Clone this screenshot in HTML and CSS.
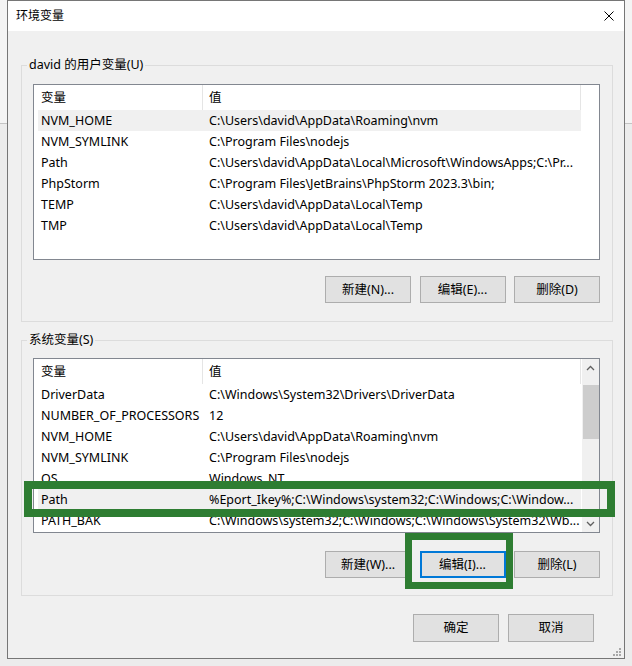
FILE: index.html
```html
<!DOCTYPE html>
<html lang="zh-CN">
<head>
<meta charset="utf-8">
<title>环境变量</title>
<link rel="stylesheet" href="styles.css">
</head>
<body>
<div class="window">
  <div class="titlebar">
    <span class="title">环境变量</span>
    <svg class="close" viewBox="0 0 10 10" aria-hidden="true"><path d="M0.5 0.5 L9.5 9.5 M9.5 0.5 L0.5 9.5" stroke="#000" stroke-width="1" fill="none"/></svg>
  </div>
  <div class="content">
    <div class="group group-user">
      <div class="group-label">david 的用户变量(U)</div>
      <div class="list list-user">
        <div class="list-main">
          <div class="list-head"><div class="head-cell head-name">变量</div><div class="head-cell head-value">值</div></div>
          <div class="row is-selected"><div class="cell-name">NVM_HOME</div><div class="cell-value">C:\Users\david\AppData\Roaming\nvm</div></div>
          <div class="row"><div class="cell-name">NVM_SYMLINK</div><div class="cell-value">C:\Program Files\nodejs</div></div>
          <div class="row"><div class="cell-name">Path</div><div class="cell-value">C:\Users\david\AppData\Local\Microsoft\WindowsApps;C:\Pr...</div></div>
          <div class="row"><div class="cell-name">PhpStorm</div><div class="cell-value">C:\Program Files\JetBrains\PhpStorm 2023.3\bin;</div></div>
          <div class="row"><div class="cell-name">TEMP</div><div class="cell-value">C:\Users\david\AppData\Local\Temp</div></div>
          <div class="row"><div class="cell-name">TMP</div><div class="cell-value">C:\Users\david\AppData\Local\Temp</div></div>
        </div>
      </div>
      <div class="btns">
        <button class="btn">新建(N)...</button>
        <button class="btn">编辑(E)...</button>
        <button class="btn">删除(D)</button>
      </div>
    </div>
    <div class="group group-sys">
      <div class="group-label">系统变量(S)</div>
      <div class="list list-sys">
        <div class="list-main">
          <div class="list-head"><div class="head-cell head-name">变量</div><div class="head-cell head-value">值</div></div>
          <div class="row"><div class="cell-name">DriverData</div><div class="cell-value">C:\Windows\System32\Drivers\DriverData</div></div>
          <div class="row"><div class="cell-name">NUMBER_OF_PROCESSORS</div><div class="cell-value">12</div></div>
          <div class="row"><div class="cell-name">NVM_HOME</div><div class="cell-value">C:\Users\david\AppData\Roaming\nvm</div></div>
          <div class="row"><div class="cell-name">NVM_SYMLINK</div><div class="cell-value">C:\Program Files\nodejs</div></div>
          <div class="row"><div class="cell-name">OS</div><div class="cell-value">Windows_NT</div></div>
          <div class="row is-selected"><div class="cell-name">Path</div><div class="cell-value">%Eport_Ikey%;C:\Windows\system32;C:\Windows;C:\Window...</div></div>
          <div class="row"><div class="cell-name">PATH_BAK</div><div class="cell-value">C:\Windows\system32;C:\Windows;C:\Windows\System32\Wb...</div></div>
        </div>
        <div class="scrollbar">
          <div class="sb-btn"><svg viewBox="0 0 9 6" class="sb-arrow"><polyline points="1,5 4.5,1.5 8,5" fill="none" stroke="#606060" stroke-width="1.3"/></svg></div>
          <div class="sb-thumb"></div>
          <div class="sb-track"></div>
          <div class="sb-btn"><svg viewBox="0 0 9 6" class="sb-arrow"><polyline points="1,1 4.5,4.5 8,1" fill="none" stroke="#606060" stroke-width="1.3"/></svg></div>
        </div>
      </div>
      <div class="btns">
        <button class="btn">新建(W)...</button>
        <button class="btn is-focused">编辑(I)...</button>
        <button class="btn">删除(L)</button>
      </div>
    </div>
    <div class="footer">
      <button class="btn btn-footer">确定</button>
      <button class="btn btn-footer">取消</button>
    </div>
  </div>
  <svg class="grip" viewBox="0 0 10 10" aria-hidden="true">
    <rect x="7" y="1" width="2" height="2" fill="#a8a8a8"/>
    <rect x="4" y="4" width="2" height="2" fill="#a8a8a8"/>
    <rect x="7" y="4" width="2" height="2" fill="#a8a8a8"/>
    <rect x="1" y="7" width="2" height="2" fill="#a8a8a8"/>
    <rect x="4" y="7" width="2" height="2" fill="#a8a8a8"/>
    <rect x="7" y="7" width="2" height="2" fill="#a8a8a8"/>
  </svg>
</div>
<div class="mark mark-row"></div>
<div class="mark mark-btn"></div>
</body>
</html>
```

FILE: styles.css
```css
* {
  box-sizing: border-box;
}

html,
body {
  margin: 0;
  padding: 0;
}

body {
  position: relative;
  width: 632px;
  height: 666px;
  overflow: hidden;
  background: linear-gradient(#f4f4f4 0 123px, #c4c4c4 123px 124px, #ececec 124px);
  font-family: "Noto Sans", "Noto Sans CJK SC", sans-serif;
  font-size: 12.5px;
  color: #000;
}

.window {
  position: relative;
  margin-left: 7px;
  width: 618px;
  height: 659px;
  border: 1px solid #767676;
  background: #f0f0f0;
  display: flex;
  flex-direction: column;
}

.titlebar {
  height: 30px;
  flex: none;
  background: #fff;
  display: flex;
  align-items: center;
  justify-content: space-between;
  padding: 0 10px 0 8px;
}

.title {
  font-size: 12px;
  line-height: 16px;
}

.close {
  width: 10px;
  height: 10px;
  display: block;
}

.content {
  flex: 1;
  display: flex;
  flex-direction: column;
  padding: 34px 11px 16px 13px;
}

.group {
  border: 1px solid #dcdcdc;
  padding: 0 12px 18px 11px;
}

.group + .group {
  margin-top: 18px;
}

.group-sys {
  padding-bottom: 17px;
}

.group-label {
  width: max-content;
  height: 16px;
  line-height: 16px;
  margin: -9px 0 0 -6px;
  padding: 0 2px;
  background: #f0f0f0;
  white-space: nowrap;
}

.list {
  display: flex;
  margin-top: 11px;
  height: 176px;
  border: 1px solid #828790;
  background: #fff;
  overflow: hidden;
}

.list-sys {
  margin-top: 10px;
  height: 175px;
}

.list-main {
  flex: 1;
  min-width: 0;
  overflow: hidden;
}

.list-head {
  display: flex;
  height: 25px;
}

.head-cell {
  height: 25px;
  line-height: 25px;
  border-right: 1px solid #e5e5e5;
  flex: none;
}

.head-name {
  width: 169px;
  padding-left: 7px;
}

.head-value {
  width: 378px;
  padding-left: 6px;
}

.row {
  display: flex;
  width: 543px;
  height: 21px;
  line-height: 21px;
  margin-left: 4px;
  white-space: nowrap;
}

.row.is-selected {
  background: #f0f0f0;
}

.cell-name {
  width: 165px;
  flex: none;
  padding-left: 3px;
  overflow: hidden;
}

.cell-value {
  flex: 1;
  min-width: 0;
  padding-left: 6px;
  overflow: hidden;
}

.scrollbar {
  width: 17px;
  flex: none;
  background: #f0f0f0;
  display: flex;
  flex-direction: column;
}

.sb-btn {
  height: 17px;
  flex: none;
  display: flex;
  align-items: center;
  justify-content: center;
}

.sb-arrow {
  width: 9px;
  height: 6px;
  display: block;
}

.sb-thumb {
  margin: 9px 0 0 1px;
  height: 54px;
  flex: none;
  background: #cdcdcd;
}

.sb-track {
  flex: 1;
}

.btns {
  display: flex;
  justify-content: flex-end;
  gap: 8.5px;
  margin-top: 16px;
}

.group-sys .btns {
  margin-top: 18px;
}

.btn {
  width: 86px;
  height: 27px;
  padding: 0;
  margin: 0;
  border: 1px solid #adadad;
  background: #e1e1e1;
  font: inherit;
  color: #000;
  display: flex;
  align-items: center;
  justify-content: center;
  line-height: 16px;
}

.btn.is-focused {
  border: 2px solid #0078d7;
}

.footer {
  display: flex;
  justify-content: flex-end;
  gap: 9px;
  margin-top: 18px;
  padding-right: 19px;
}

.btn-footer {
  height: 28px;
}

.grip {
  position: absolute;
  right: 2px;
  bottom: 1px;
  width: 10px;
  height: 10px;
}

.mark {
  position: absolute;
  border: 8px solid #2e7d32;
}

.mark-row {
  left: 24px;
  top: 481px;
  width: 591px;
  height: 36px;
}

.mark-btn {
  left: 405px;
  top: 533px;
  width: 108px;
  height: 56px;
  border-width: 7px;
}
```
